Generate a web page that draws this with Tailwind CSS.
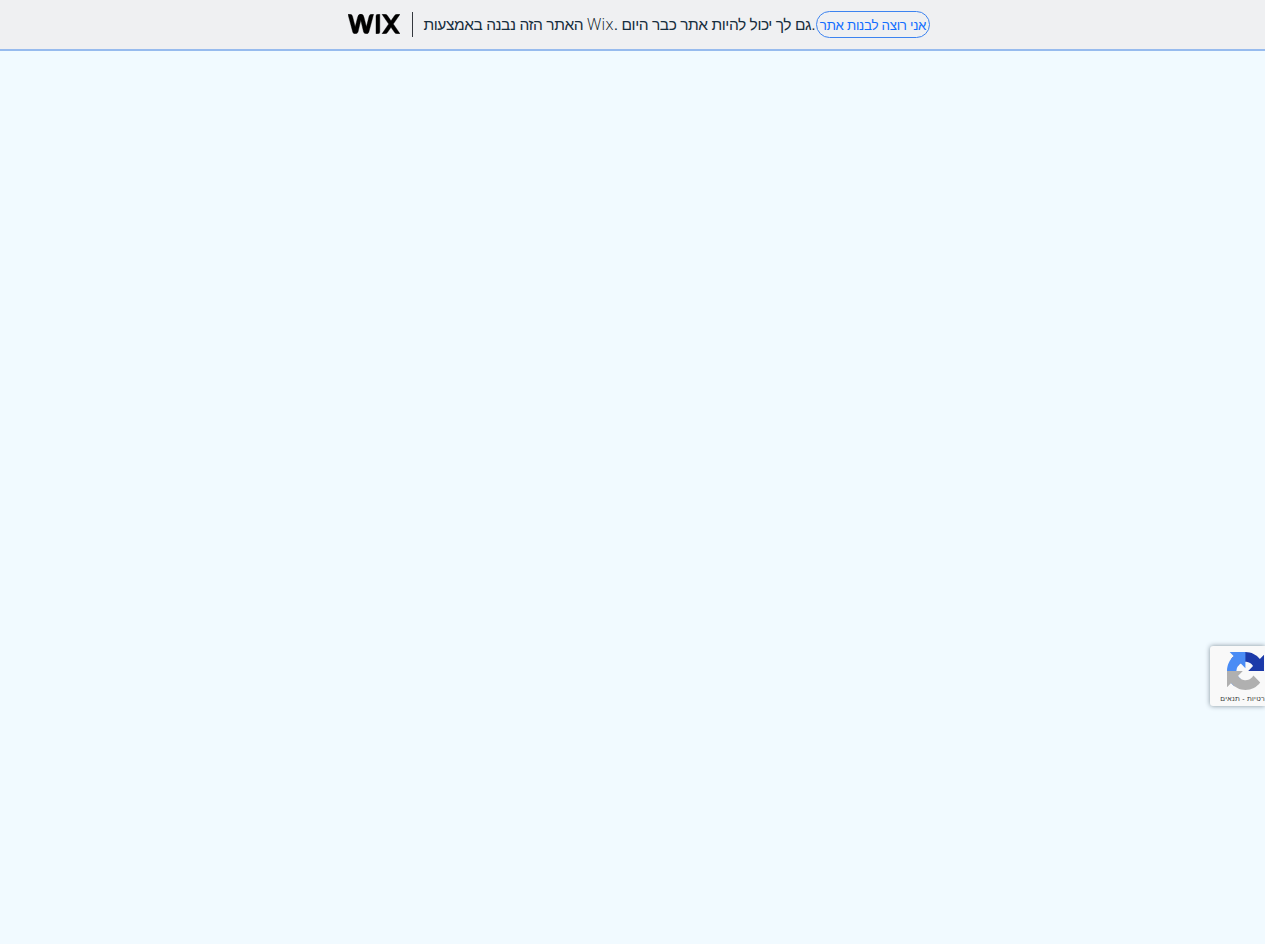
<!DOCTYPE html>
<html lang="he">
<head>
<meta charset="utf-8">
<title>Wix</title>
<script src="https://cdn.jsdelivr.net/npm/@tailwindcss/browser@4"></script>
</head>
<body class="h-screen overflow-hidden bg-[#f1faff] font-['Liberation_Sans','DejaVu_Sans',sans-serif]">
<header class="flex h-[51px] items-center border-b-2 border-[#97bbee] bg-[#eff0f2] pl-[348px]">
  <svg class="mb-0.5 h-5 w-[52px] shrink-0" viewBox="0 0 52 20" fill="#000" stroke="#000" stroke-width=".4" aria-label="Wix">
    <path d="M0 .3H2.1Q4 .3 4.5 2.2L7.2 12.8 9.6 3.4Q10.4 .1 12.8 .1T16 3.4L18.4 12.8 21.1 2.2Q21.6 .3 23.5 .3H25.6L20.8 18.2Q20.3 19.8 18.3 19.8 16.1 19.8 15.6 18L12.8 6.3 10 18Q9.5 19.8 7.3 19.8 5.3 19.8 4.8 18.2ZM28 2Q28 .3 29.8 .3H31.8V18Q31.8 19.8 30 19.8H28ZM34 .3H36.8Q38.5 .3 39.4 1.6L43 6.8 46.6 1.6Q47.5 .3 49.2 .3H52L45.3 10 52 19.8H49.2Q47.5 19.8 46.6 18.5L43 13.3 39.4 18.5Q38.5 19.8 36.8 19.8H34L40.7 10Z"/>
  </svg>
  <div class="ml-3 h-[25px] w-px shrink-0 bg-[#34383e]"></div>
  <p dir="ltr" class="ml-[10.5px] w-[392.5px] shrink-0 whitespace-nowrap text-[15.5px] leading-6 tracking-[-0.44px] text-[#162d3d]">האתר הזה נבנה באמצעות <span class="font-['Open_Sans',sans-serif] text-[16px] font-light tracking-[0.3px] text-[#0c1a26]">Wix</span>. גם לך יכול להיות אתר כבר היום.</p>
  <a class="flex h-[27px] w-[114px] shrink-0 items-center justify-center whitespace-nowrap rounded-full border border-[#3c83f0] pt-[2px] text-[13.33px] tracking-[-0.3px] text-[#116dff]">אני רוצה לבנות אתר</a>
</header>
<aside class="absolute right-0 top-[646px] flex h-[60px] w-[55px] flex-col rounded-l-[3px] bg-[#f9f9f9] shadow-[0_0_5px_#80909a]">
  <svg class="ml-[17px] mt-1.5 h-[38px] w-[37px] shrink-0 blur-[0.3px]" viewBox="0 0 64 64" preserveAspectRatio="none">
    <path fill="#1c3aa9" d="M64 31.955l-.033-1.37V4.687l-7.16 7.16C50.948 4.674 42.033.093 32.05.093c-10.4 0-19.622 4.96-25.458 12.64l11.736 11.86a15.55 15.55 0 0 1 4.754-5.334c2.05-1.6 4.952-2.906 8.968-2.906.485 0 .86.057 1.135.163 4.976.393 9.288 3.14 11.828 7.124l-8.307 8.307L64 31.953"/>
    <path fill="#4a8cf5" d="M31.862.094l-1.37.033H4.594l7.16 7.16C4.58 13.147 0 22.06 0 32.046c0 10.4 4.96 19.622 12.64 25.458L24.5 45.768a15.55 15.55 0 0 1-5.334-4.754c-1.6-2.05-2.906-4.952-2.906-8.968 0-.485.057-.86.163-1.135.393-4.976 3.14-9.288 7.124-11.828l8.307 8.307L31.86.095"/>
    <path fill="#b0b0b0" d="M.001 32.045l.033 1.37v25.898l7.16-7.16c5.86 7.173 14.774 11.754 24.76 11.754 10.4 0 19.622-4.96 25.458-12.64l-11.736-11.86a15.55 15.55 0 0 1-4.754 5.334c-2.05 1.6-4.952 2.906-8.968 2.906-.485 0-.86-.057-1.135-.163-4.976-.393-9.288-3.14-11.828-7.124l8.307-8.307L0 32.047"/>
  </svg>
  <div dir="rtl" class="mt-[3px] flex h-3 w-[55px] justify-start whitespace-nowrap text-[7px] leading-3 tracking-[0.25px] text-[#333]">רטיות - תנאים</div>
</aside>
</body>
</html>
